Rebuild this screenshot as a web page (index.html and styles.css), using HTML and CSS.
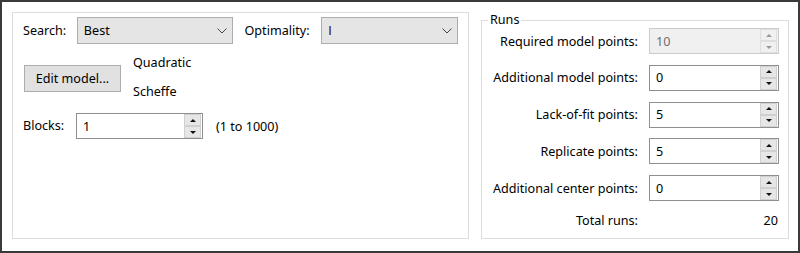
FILE: index.html
```
<!DOCTYPE html>
<html>
<head>
<meta charset="utf-8">
<link rel="stylesheet" href="styles.css">
</head>
<body>
<div class="window">
  <div class="group left">
    <div class="row r1">
      <span class="lbl search-lbl">Search:</span>
      <div class="combo combo-best"><span class="ctext">Best</span><svg class="chev" width="10" height="6" viewBox="0 0 10 6"><path d="M0.5 0.5 L5 5 L9.5 0.5" fill="none" stroke="#444" stroke-width="1"/></svg></div>
      <span class="lbl opt-lbl">Optimality:</span>
      <div class="combo combo-opt"><span class="ctext">I</span><svg class="chev" width="10" height="6" viewBox="0 0 10 6"><path d="M0.5 0.5 L5 5 L9.5 0.5" fill="none" stroke="#444" stroke-width="1"/></svg></div>
    </div>
    <div class="row r2">
      <button class="btn">Edit model...</button>
      <div class="model-info">
        <span>Quadratic</span>
        <span>Scheffe</span>
      </div>
    </div>
    <div class="row r3">
      <span class="lbl blocks-lbl">Blocks:</span>
      <div class="spin blocks-spin"><span class="val">1</span><span class="btns"><span class="sb up"></span><span class="sb dn"></span></span></div>
      <span class="range">(1 to 1000)</span>
    </div>
  </div>
  <fieldset class="group right">
    <legend>Runs</legend>
    <div class="runs">
      <span class="rl">Required model points:</span>
      <div class="spin disabled"><span class="val">10</span><span class="btns"><span class="sb up"></span><span class="sb dn"></span></span></div>
      <span class="rl">Additional model points:</span>
      <div class="spin"><span class="val">0</span><span class="btns"><span class="sb up"></span><span class="sb dn"></span></span></div>
      <span class="rl">Lack-of-fit points:</span>
      <div class="spin"><span class="val">5</span><span class="btns"><span class="sb up"></span><span class="sb dn"></span></span></div>
      <span class="rl">Replicate points:</span>
      <div class="spin"><span class="val">5</span><span class="btns"><span class="sb up"></span><span class="sb dn"></span></span></div>
      <span class="rl">Additional center points:</span>
      <div class="spin"><span class="val">0</span><span class="btns"><span class="sb up"></span><span class="sb dn"></span></span></div>
      <span class="rl total">Total runs:</span>
      <span class="total-val">20</span>
    </div>
  </fieldset>
</div>
</body>
</html>
```
FILE: styles.css
```
* { box-sizing: border-box; }
html, body { margin: 0; padding: 0; background: #fff; }
body {
  font-family: "Noto Sans", "Open Sans", sans-serif;
  font-size: 12.6px;
  color: #000;
}
.window {
  width: 800px;
  height: 253px;
  border: 2px solid #3a3a3a;
  padding: 10px 9px 12px 10px;
  display: flex;
  gap: 12px;
  background: #fff;
}
.group {
  border: 1px solid #dcdcdc;
  margin: 0;
}
.left {
  width: 457px;
  padding: 4px 10px 0 10px;
  display: flex;
  flex-direction: column;
}
.row { display: flex; align-items: center; }
.lbl { line-height: 16px; }
.search-lbl { width: 54px; }
.combo {
  height: 27px;
  border: 1px solid #adadad;
  background: #e5e5e5;
  display: flex;
  align-items: center;
  padding: 0 5px 0 6px;
}
.combo .ctext { flex: 1; }
.combo-best { width: 156px; }
.opt-lbl { margin-left: 12px; width: 77px; }
.combo-opt { width: 137px; }
.combo-opt .ctext { color: #3a1030; font-family: "Liberation Sans", sans-serif; }
.r2 { margin-top: 11px; align-items: flex-start; }
.btn {
  font: inherit;
  color: #000;
  width: 97px;
  height: 27px;
  margin-top: 10px;
  margin-left: 1px;
  background: #e1e1e1;
  border: 1px solid #adadad;
  padding: 0;
}
.model-info {
  display: flex;
  flex-direction: column;
  gap: 13px;
  margin-left: 12px;
  line-height: 16px;
}
.r3 { margin-top: 13px; }
.blocks-lbl { width: 53px; }
.spin {
  height: 26px;
  border: 1px solid #8f8f8f;
  background: #fff;
  display: flex;
  align-items: center;
  padding: 0 1px 0 6px;
}
.spin .val { flex: 1; }
.btns {
  width: 17px;
  height: 24px;
  display: flex;
  flex-direction: column;
}
.sb {
  flex: 1;
  background: #e6e6e6;
  border: 1px solid #d0d0d0;
  display: flex;
  align-items: center;
  justify-content: center;
}
.sb::after {
  content: "";
  width: 0;
  height: 0;
  border-left: 3px solid transparent;
  border-right: 3px solid transparent;
}
.up::after { border-bottom: 3px solid #111; }
.dn::after { border-top: 3px solid #111; }
.blocks-spin { width: 127px; }
.range { margin-left: 13px; }
.right {
  width: 308px;
  padding: 0 9px 0 10px;
}
.right legend {
  padding: 0 2px;
  margin-left: -4px;
  line-height: 16px;
}
.runs {
  display: grid;
  grid-template-columns: 1fr 130px;
  column-gap: 11px;
  row-gap: 10.75px;
  align-items: center;
}
.rl { text-align: right; }
.disabled { background: #f0f0f0; border-color: #cccccc; color: #6d6d6d; }
.disabled .sb { background: #f0f0f0; border-color: #dedede; }
.disabled .up::after { border-bottom-color: #9a9a9a; }
.disabled .dn::after { border-top-color: #9a9a9a; }
.total { margin-top: 0; }
.total-val { text-align: right; margin-top: 0; padding-right: 1px; }
```
